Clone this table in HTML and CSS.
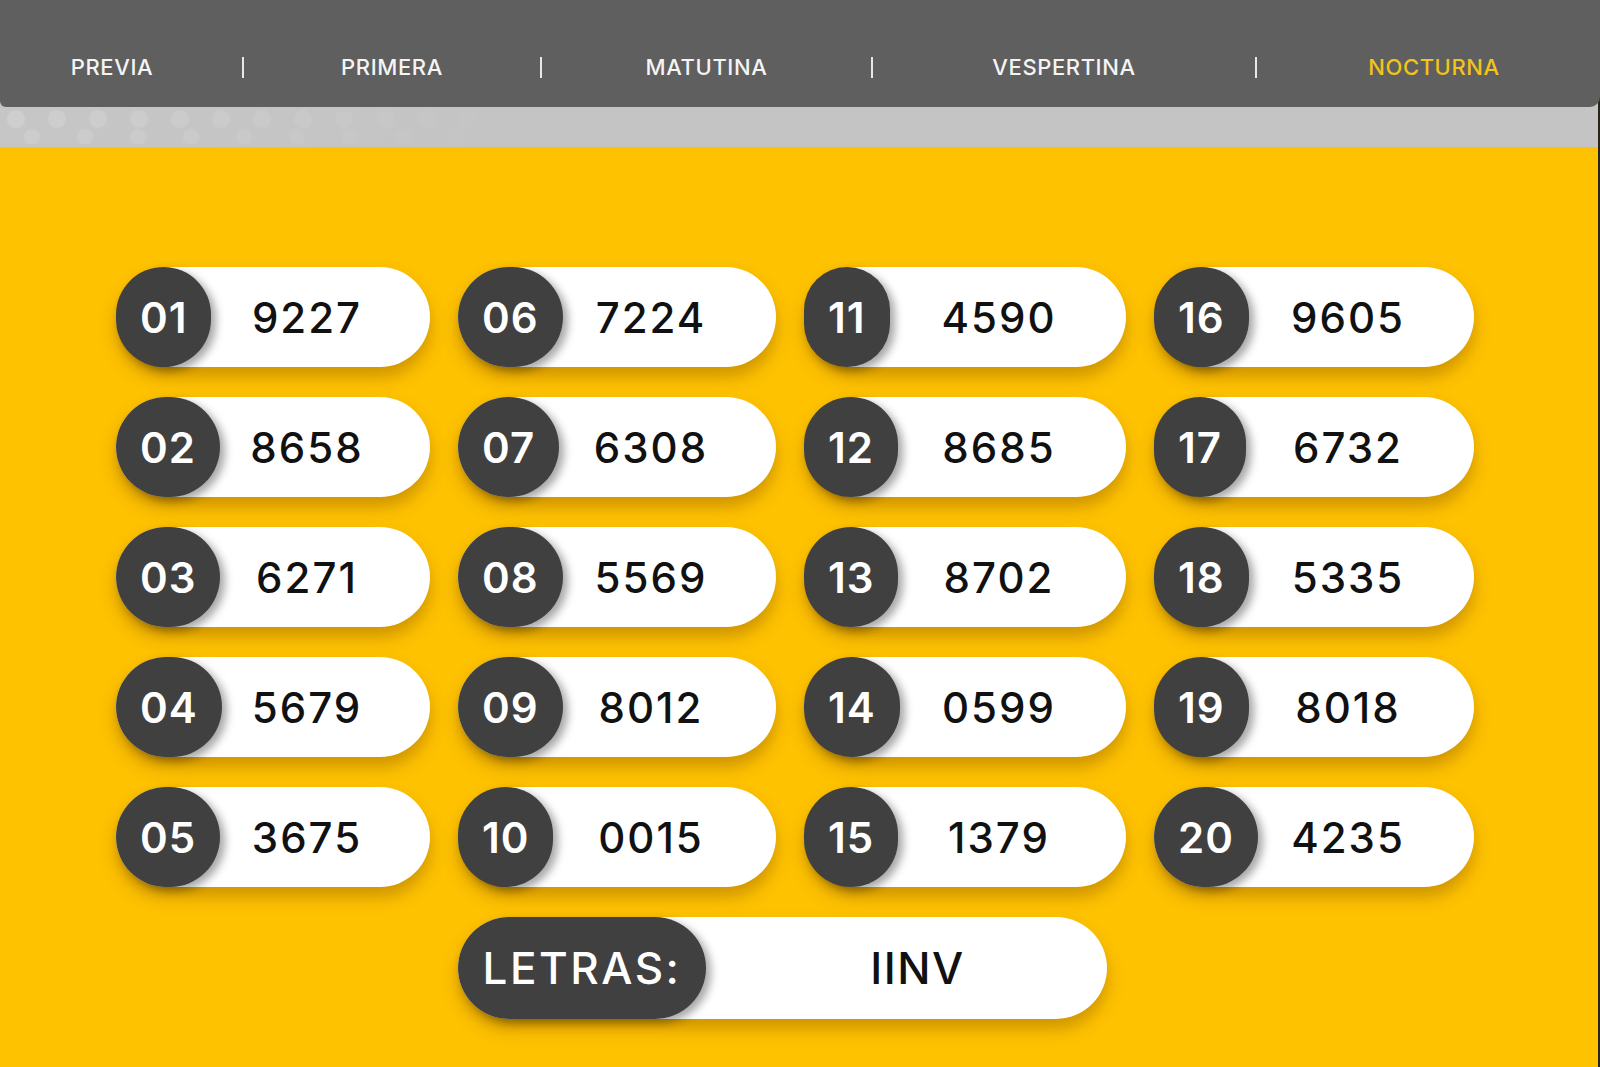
FILE: index.html
```html
<!DOCTYPE html>
<html lang="es">
<head>
<meta charset="utf-8">
<title>Quiniela Nocturna</title>
<link rel="stylesheet" href="styles.css">
</head>
<body>
<div class="page">
  <nav class="topnav">
    <a class="nav-item first">PREVIA</a>
    <a class="nav-item">PRIMERA</a>
    <a class="nav-item">MATUTINA</a>
    <a class="nav-item">VESPERTINA</a>
    <a class="nav-item last active">NOCTURNA</a>
  </nav>
  <div class="band"></div>
  <main class="board">
    <div class="grid">
      <div class="pill"><span class="pos">01</span><span class="num">9227</span></div>
      <div class="pill"><span class="pos">06</span><span class="num">7224</span></div>
      <div class="pill"><span class="pos">11</span><span class="num">4590</span></div>
      <div class="pill"><span class="pos">16</span><span class="num">9605</span></div>

      <div class="pill"><span class="pos">02</span><span class="num">8658</span></div>
      <div class="pill"><span class="pos">07</span><span class="num">6308</span></div>
      <div class="pill"><span class="pos">12</span><span class="num">8685</span></div>
      <div class="pill"><span class="pos">17</span><span class="num">6732</span></div>

      <div class="pill"><span class="pos">03</span><span class="num">6271</span></div>
      <div class="pill"><span class="pos">08</span><span class="num">5569</span></div>
      <div class="pill"><span class="pos">13</span><span class="num">8702</span></div>
      <div class="pill"><span class="pos">18</span><span class="num">5335</span></div>

      <div class="pill"><span class="pos">04</span><span class="num">5679</span></div>
      <div class="pill"><span class="pos">09</span><span class="num">8012</span></div>
      <div class="pill"><span class="pos">14</span><span class="num">0599</span></div>
      <div class="pill"><span class="pos">19</span><span class="num">8018</span></div>

      <div class="pill"><span class="pos">05</span><span class="num">3675</span></div>
      <div class="pill"><span class="pos">10</span><span class="num">0015</span></div>
      <div class="pill"><span class="pos">15</span><span class="num">1379</span></div>
      <div class="pill"><span class="pos">20</span><span class="num">4235</span></div>

      <div class="letras"><span class="letras-label">LETRAS:</span><span class="letras-value">IINV</span></div>
    </div>
  </main>
</div>
</body>
</html>
```

FILE: styles.css
```css
* { box-sizing: border-box; }

html, body {
  margin: 0;
  padding: 0;
  background: #fec200;
}

body {
  width: 1600px;
  height: 1067px;
  overflow: hidden;
  font-family: "Inter", "Liberation Sans", sans-serif;
}

.page {
  width: 1600px;
  height: 1067px;
  display: flex;
  flex-direction: column;
  background: #c3c3c3;
  border-right: 2px solid #2a2418;
}

.topnav {
  height: 107px;
  flex: none;
  background: #5f5f5f;
  border-radius: 0 0 10px 6px;
  margin-right: -2px;
  display: grid;
  grid-template-columns: 242px 298px 331px 384px 1fr;
  align-items: start;
  padding-top: 57px;
  position: relative;
  z-index: 2;
}

.nav-item {
  height: 21px;
  line-height: 21px;
  text-align: center;
  color: #f4f4f4;
  font-size: 22px;
  font-weight: 500;
  letter-spacing: 0.6px;
  border-left: 2px solid #e8e8e8;
}

.nav-item.first {
  border-left: none;
  padding-right: 18px;
}

.nav-item.last {
  padding-left: 11px;
}

.nav-item.active {
  color: #f2c31a;
}

.band {
  height: 40px;
  flex: none;
  background:
    linear-gradient(to right, rgba(196,196,196,0.1) 0, rgba(196,196,196,0.5) 250px, #c4c4c4 520px),
    radial-gradient(circle at 16px 12px, #d0d0d0 0 8px, transparent 10px) 0 0 / 41px 40px,
    radial-gradient(circle at 32px 30px, #cecece 0 7px, transparent 9px) 0 0 / 53px 37px,
    #c6c6c6;
}

.board {
  flex: 1;
  background: #fec200;
  padding: 120px 0 0 116px;
}

.grid {
  display: grid;
  grid-template-columns: 314px 318px 322px 320px;
  grid-auto-rows: 100px;
  column-gap: 28px;
  row-gap: 30px;
}

.pill {
  display: grid;
  align-items: center;
  height: 100px;
  background: #ffffff;
  border-radius: 50px;
  box-shadow: 0 10px 16px rgba(150, 95, 0, 0.45);
}

.pos, .num {
  grid-area: 1 / 1;
}

.pos {
  justify-self: start;
  height: 100px;
  min-width: 84px;
  padding: 0 24px;
  display: flex;
  align-items: center;
  justify-content: center;
  background: #404040;
  border-radius: 50px;
  color: #ffffff;
  font-size: 42px;
  font-weight: 600;
  letter-spacing: 1px;
  box-shadow: 5px 4px 9px rgba(0, 0, 0, 0.35);
}

.num {
  justify-self: center;
  padding-left: 68px;
  color: #111111;
  font-size: 42px;
  font-weight: 500;
  letter-spacing: 2px;
}

.letras {
  grid-column: 2 / span 2;
  width: 649px;
  height: 102px;
  display: flex;
  align-items: center;
  background: #ffffff;
  border-radius: 51px;
  box-shadow: 0 10px 16px rgba(150, 95, 0, 0.45);
}

.letras-label {
  width: 248px;
  height: 102px;
  flex: none;
  display: flex;
  align-items: center;
  justify-content: center;
  background: #404040;
  border-radius: 51px;
  color: #ffffff;
  font-size: 44px;
  font-weight: 500;
  letter-spacing: 2.5px;
  box-shadow: 5px 4px 9px rgba(0, 0, 0, 0.35);
}

.letras-value {
  flex: 1;
  text-align: center;
  padding-left: 22px;
  color: #111111;
  font-size: 44px;
  font-weight: 500;
  letter-spacing: 1.5px;
}
```
